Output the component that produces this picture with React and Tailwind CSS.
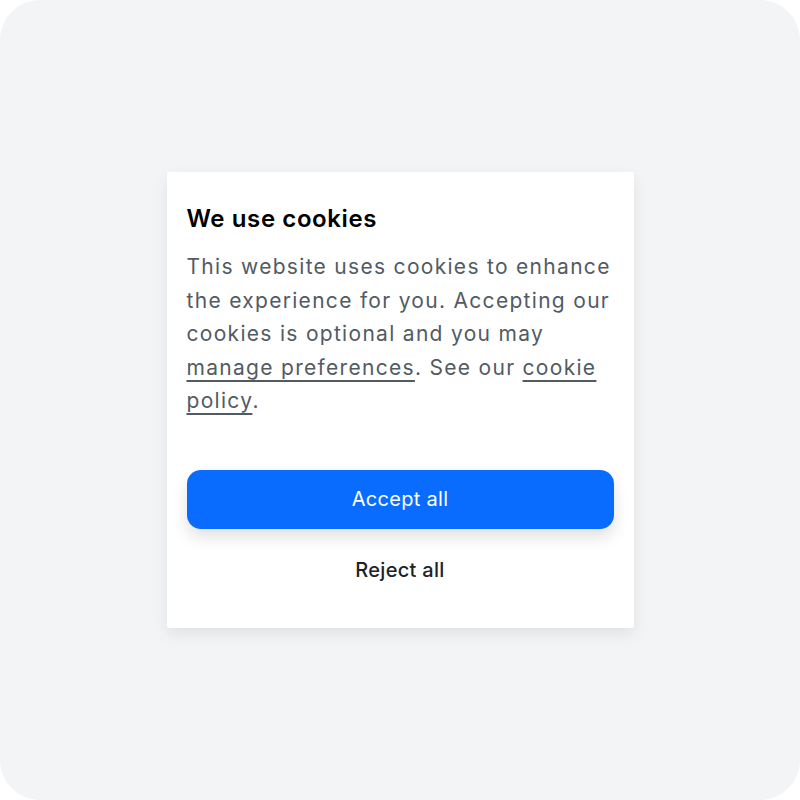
export default function App() {
  return (
    <div className="h-screen w-full bg-white" style={{ fontFamily: "Inter, 'Noto Sans', sans-serif" }}>
      <div className="flex h-full w-full items-center justify-center rounded-[40px] bg-[#f3f4f6]">
        <div className="w-[467px] rounded-[2px] bg-white px-5 pt-[31px] pb-[44px] shadow-[0_6px_16px_rgba(0,0,0,0.08)]">
          <h2 className="text-[24px] leading-[32px] font-semibold tracking-[0.6px] text-black">We use cookies</h2>
          <p className="mt-[15px] text-[21px] leading-[33.6px] tracking-[1.3px] text-[#525b64]">
            This website uses cookies to enhance the experience for you. Accepting our cookies is optional and you may{" "}
            <a href="#" className="underline decoration-[1.5px] underline-offset-[5px]">manage preferences</a>. See our{" "}
            <a href="#" className="underline decoration-[1.5px] underline-offset-[5px]">cookie policy</a>.
          </p>
          <button className="mt-[52px] flex h-[59px] w-full items-center justify-center rounded-[14px] bg-[#0a6cff] text-[20px] tracking-[0.3px] text-white shadow-[0_8px_16px_rgba(0,0,0,0.12)]">
            Accept all
          </button>
          <button className="mt-[27px] block w-full text-center text-[20px] leading-[28px] font-medium tracking-[0.3px] text-[#1f2124]">
            Reject all
          </button>
        </div>
      </div>
    </div>
  );
}
